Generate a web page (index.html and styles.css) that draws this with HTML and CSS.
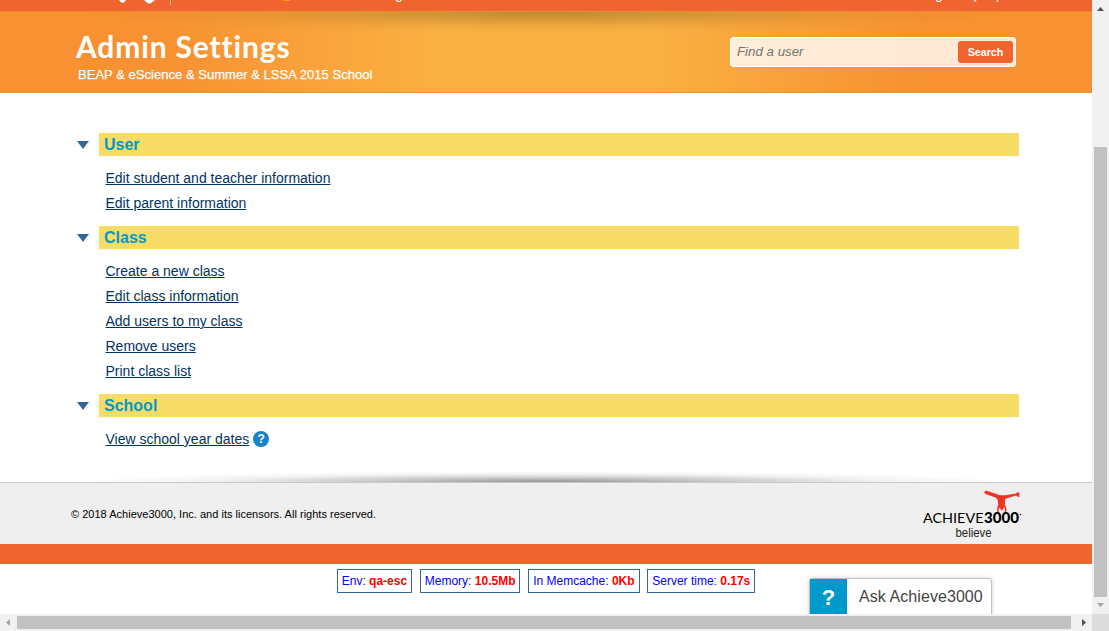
FILE: index.html
```html
<!DOCTYPE html>
<html lang="en">
<head>
<meta charset="utf-8">
<title>Admin Settings</title>
<link rel="stylesheet" href="styles.css">
</head>
<body>
<div class="viewport">
  <main class="page">
    <div class="topbar">
      <svg class="topbar-icons" width="300" height="11" viewBox="0 0 300 11">
        <path d="M119 0h7l-2 2.200q-1.500 1-3 0z" fill="#fff"/>
        <path d="M144 0h11l-4 3q-1.800 1.200-3.500 0z" fill="#fff"/>
        <path d="M170.500 0v5" stroke="#f7b299"/>
        <path d="M283 0h8q-4 2-8 0z" fill="#fdb913"/>
      </svg>
      <span class="topbar-left">g</span>
      <span class="topbar-right">g</span><span class="topbar-paren">(</span><span class="topbar-paren-end">)</span>
    </div>
    <header class="banner">
      <div class="heading">
        <h1 class="title">Admin Settings</h1>
        <p class="school">BEAP &amp; eScience &amp; Summer &amp; LSSA 2015 School</p>
      </div>
      <form class="search">
        <input class="search-input" type="text" placeholder="Find a user" aria-label="Find a user">
        <button class="search-button" type="button">Search</button>
      </form>
    </header>
    <div class="content">
      <section class="group">
        <span class="arrow"></span>
        <div class="group-body">
          <h2 class="group-title">User</h2>
          <ul class="links">
            <li><a href="#">Edit student and teacher information</a></li>
            <li><a href="#">Edit parent information</a></li>
          </ul>
        </div>
      </section>
      <section class="group">
        <span class="arrow"></span>
        <div class="group-body">
          <h2 class="group-title">Class</h2>
          <ul class="links">
            <li><a href="#">Create a new class</a></li>
            <li><a href="#">Edit class information</a></li>
            <li><a href="#">Add users to my class</a></li>
            <li><a href="#">Remove users</a></li>
            <li><a href="#">Print class list</a></li>
          </ul>
        </div>
      </section>
      <section class="group">
        <span class="arrow"></span>
        <div class="group-body">
          <h2 class="group-title">School</h2>
          <ul class="links">
            <li><a href="#">View school year dates</a><span class="help">?</span></li>
          </ul>
        </div>
      </section>
    </div>
    <div class="shade"></div>
    <footer class="footer">
      <p class="copyright">© 2018 Achieve3000, Inc. and its licensors. All rights reserved.</p>
      <svg class="logo" width="100" height="50" viewBox="0 0 100 50">
        <path d="M61 2.500l1.800-2 2.500.8 11.500 4h5.400l11-1.800 1-1.200 2 .2.300 4.500-2.300-.4-1-1-8.500 2.300-2.400 1.200-.8 8.200-1.500 1.200h-3l-1.500-1.400-.8-7.400-2.200-2.200-9.500-3.200z" fill="#ee3524"/>
        <path d="M75.500 15.500l-.8 4.500 1 3.500M81.800 15.500l1 4.500-.8 3.500" fill="none" stroke="#ee3524" stroke-width="1.500"/>
        <circle cx="78.800" cy="19" r="1.300" fill="#ee3524"/>
        <text class="logo-light" x="0" y="33" textLength="60.500" lengthAdjust="spacingAndGlyphs">ACHIEVE</text>
        <text class="logo-bold" x="61" y="33" textLength="35" lengthAdjust="spacingAndGlyphs">3000</text>
        <circle cx="97.500" cy="24.500" r=".7"/>
        <text class="logo-word" x="32.500" y="47" textLength="36" lengthAdjust="spacingAndGlyphs">believe</text>
      </svg>
    </footer>
    <div class="stripe"></div>
    <div class="debug">
      <span class="stat">Env: <b>qa-esc</b></span>
      <span class="stat">Memory: <b>10.5Mb</b></span>
      <span class="stat">In Memcache: <b>0Kb</b></span>
      <span class="stat">Server time: <b>0.17s</b></span>
    </div>
    <div class="ask"><span class="ask-mark">?</span><span class="ask-label">Ask Achieve3000</span></div>
  </main>
  <div class="vbar">
    <svg width="17" height="17"><path d="M5 11h7l-3.500-4z" fill="#505050"/></svg>
    <div class="vthumb"></div>
    <svg width="17" height="17"><path d="M5 6h7l-3.500 4z" fill="#a3a3a3"/></svg>
  </div>
  <div class="hbar">
    <svg width="17" height="17"><path d="M10 5v7l-4-3.500z" fill="#a3a3a3"/></svg>
    <div class="hthumb"></div>
    <svg width="17" height="17"><path d="M7 5v7l4-3.500z" fill="#505050"/></svg>
  </div>
  <div class="corner"></div>
</div>
</body>
</html>
```
FILE: styles.css
```css
* { box-sizing: border-box; }
body { margin: 0; font-family: "Liberation Sans", Arial, sans-serif; overflow: hidden; }
h1, h2, p, ul { margin: 0; padding: 0; }
svg { display: block; }
.viewport { display: grid; grid-template: 614px 17px / 1092px 17px; width: 1109px; height: 631px; }
.page { position: relative; display: flex; flex-direction: column; overflow: hidden; background: #fff; }
.topbar { position: relative; flex: none; height: 11px; overflow: hidden; background: #f06430; color: #fff; font-size: 14px; line-height: 14px; }
.topbar-left, .topbar-right, .topbar-paren, .topbar-paren-end { position: absolute; top: -13px; }
.topbar-left { left: 395px; }
.topbar-right { left: 935px; }
.topbar-paren { left: 972px; }
.topbar-paren-end { left: 996px; }
.banner {
  flex: none; display: flex; justify-content: space-between; height: 82px; padding: 0 76px;
  border-top: 1px solid #ef8b2e; border-bottom: 1px solid #f6902f;
  background:
    radial-gradient(ellipse 460px 22px at 50% 0, rgba(95, 75, 20, .4), rgba(100, 75, 20, .24) 35%, rgba(110, 80, 20, .07) 70%, transparent),
    linear-gradient(90deg, #f79131 0, #f79131 165px, #fbb143 440px, #fbb143 650px, #f79131 920px);
  color: #fff;
}
.title { margin-top: 15px; font: 700 30px/38px Lato, sans-serif; font-variant-ligatures: none; letter-spacing: .85px; white-space: nowrap; }
.school { padding: 2px 0 0 2px; font-size: 13px; line-height: 16px; letter-spacing: .03px; -webkit-text-stroke: .25px #fff; white-space: nowrap; }
.search { display: flex; align-items: center; width: 286px; height: 30px; margin-top: 25px; padding: 0 2px 0 6px; border: 1px solid #fff; border-radius: 3px; background: rgba(255, 255, 255, .8); }
.search-input { flex: 1; min-width: 0; padding: 0; border: 0; background: none; font: italic 13.300px/20px "Liberation Sans", Arial, sans-serif; }
.search-input::placeholder { color: #757575; }
.search-button { width: 55px; height: 22px; padding: 0; border: 0; border-radius: 3px; background: #f06430; color: #fff; font: 700 10.700px/22px "Liberation Sans", Arial, sans-serif; }
.content { flex: none; height: 377px; padding: 40px 73px 0 77px; }
.group { display: grid; grid-template-columns: 22px 1fr; }
.arrow { width: 12px; height: 8px; margin-top: 8px; background: #336699; clip-path: polygon(0 0, 100% 0, 50% 100%); }
.group-title { height: 23px; padding-left: 5px; background: #f7dc66; color: #0099cc; font-size: 16px; line-height: 23px; }
.links { padding: 10px 0 10px 6.500px; list-style: none; }
.links li { display: flex; align-items: center; height: 25px; font-size: 14px; line-height: 25px; }
.links a { color: #003366; }
.help { width: 16px; height: 16px; margin: 0 0 1px 4px; border-radius: 50%; background: #1a82c7; color: #fff; font-size: 12px; font-weight: 700; line-height: 16px; text-align: center; }
.shade { flex: none; height: 12px; background: radial-gradient(ellipse 470px 11px at 50% 100%, rgba(0, 0, 0, .42), rgba(0, 0, 0, .2) 40%, rgba(0, 0, 0, .05) 72%, transparent); }
.footer { flex: none; display: flex; justify-content: space-between; height: 62px; padding: 0 69px 0 71px; border-top: 1px solid #c8c8c8; background: #efefef; }
.copyright { font-size: 11px; line-height: 62px; letter-spacing: .015px; color: #000; }
.logo { margin-top: 7px; overflow: visible; }
.logo-light { font: 400 14px Lato, sans-serif; }
.logo-bold { font: 900 14.500px Lato, sans-serif; }
.logo-word { font: 12px "Liberation Sans", Arial, sans-serif; fill: #222; }
.stripe { flex: none; height: 20px; background: #f06430; }
.debug { display: flex; justify-content: center; gap: 7.700px; margin-top: 5px; }
.stat { height: 24px; padding: 0 4px; border: 1px solid #336699; color: #0000ff; font-size: 12px; line-height: 22px; white-space: nowrap; }
.stat b { color: #ff0000; }
.ask { position: absolute; left: 809px; top: 578px; display: flex; width: 183px; height: 40px; border: 1px solid #c2c2c2; border-radius: 3px; background: #fff; box-shadow: 0 0 4px rgba(0, 0, 0, .18); }
.ask-mark { width: 37px; background: #0099cc; color: #fff; font-size: 22px; font-weight: 700; line-height: 37px; text-align: center; }
.ask-label { padding-left: 12px; color: #444; font-size: 16px; line-height: 35px; letter-spacing: .07px; white-space: nowrap; }
.vbar { display: flex; flex-direction: column; background: #f1f1f1; }
.vthumb { width: 13px; height: 450px; margin: 130px 2px 0; background: #c1c1c1; }
.hbar { display: flex; background: #f1f1f1; }
.hthumb { width: 1054px; height: 13px; margin: 2px 4px 0 0; background: #c1c1c1; }
.corner { background: #dcdcdc; }
```
